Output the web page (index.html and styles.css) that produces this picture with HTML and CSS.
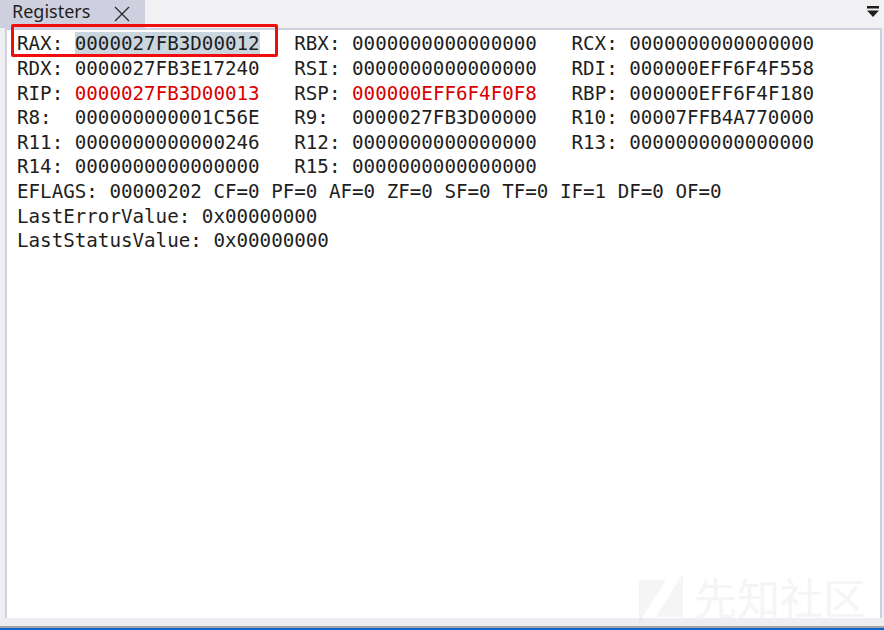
FILE: index.html
```html
<!DOCTYPE html>
<html lang="en">
<head>
<meta charset="utf-8">
<title>Registers</title>
<link rel="stylesheet" href="styles.css">
</head>
<body>
<div class="window">
  <header class="tabbar">
    <div class="tab">
      <span class="tab-title">Registers</span>
      <svg class="tab-close" width="16" height="16" viewBox="0 0 16 16"><path d="M1 1 L15 15 M15 1 L1 15" stroke="#2a2a2a" stroke-width="1.3" fill="none"/></svg>
    </div>
    <svg class="tab-menu" width="12" height="12" viewBox="0 0 12 12"><path d="M0 0H12V2.5H0Z M0 4.5H12L6 11Z" fill="#1e1e1e"/></svg>
  </header>
  <main class="pane">
    <div class="registers">
      <div class="line">RAX: <span class="sel">0000027FB3D00012</span>   RBX: 0000000000000000   RCX: 0000000000000000</div>
      <div class="line">RDX: 0000027FB3E17240   RSI: 0000000000000000   RDI: 000000EFF6F4F558</div>
      <div class="line">RIP: <span class="red">0000027FB3D00013</span>   RSP: <span class="red">000000EFF6F4F0F8</span>   RBP: 000000EFF6F4F180</div>
      <div class="line">R8:  000000000001C56E   R9:  0000027FB3D00000   R10: 00007FFB4A770000</div>
      <div class="line">R11: 0000000000000246   R12: 0000000000000000   R13: 0000000000000000</div>
      <div class="line">R14: 0000000000000000   R15: 0000000000000000</div>
      <div class="line">EFLAGS: 00000202 CF=0 PF=0 AF=0 ZF=0 SF=0 TF=0 IF=1 DF=0 OF=0</div>
      <div class="line">LastErrorValue: 0x00000000</div>
      <div class="line">LastStatusValue: 0x00000000</div>
    </div>
    <div class="watermark">
      <svg width="44" height="50" viewBox="0 0 44 50"><path d="M0 7H27L0 50Z M44 0V44H17Z" fill="#000" fill-opacity="0.04"/></svg>
      <span class="watermark-text">先知社区</span>
    </div>
  </main>
  <div class="callout"></div>
  <footer class="statusbar"></footer>
</div>
</body>
</html>
```
FILE: styles.css
```css
html, body {
  margin: 0;
  padding: 0;
  background: #eeeef2;
}
.window {
  position: relative;
  width: 884px;
  height: 630px;
  display: flex;
  flex-direction: column;
  overflow: hidden;
}
.tabbar {
  height: 28px;
  flex: none;
  display: flex;
  align-items: flex-start;
  justify-content: space-between;
  background: #f1f1f4;
}
.tab {
  width: 145px;
  height: 28px;
  background: #cfd0df;
  display: flex;
  align-items: center;
  box-sizing: border-box;
  padding-left: 12px;
  font-family: "Noto Sans", "Open Sans", sans-serif;
  font-size: 18px;
  color: #1e1e1e;
}
.tab-title {
  position: relative;
  top: -3px;
}
.tab-close {
  margin-left: 24px;
}
.tab-menu {
  margin: 6px 5px 0 0;
}
.pane {
  position: relative;
  flex: none;
  height: 590px;
  margin: 0 2px 0 5px;
  box-sizing: border-box;
  background: #fff;
  border: 2px solid #cfd0df;
  border-bottom: 0;
}
.registers {
  padding: 2.4px 0 0 10px;
  font-family: "DejaVu Sans Mono", monospace;
  font-size: 19.2px;
  line-height: 24.6px;
  color: #1e1e1e;
}
.line {
  white-space: pre;
}
.sel {
  background: #c9d6de;
}
.red {
  color: #d80000;
}
.watermark {
  position: absolute;
  right: 14px;
  bottom: -5px;
  display: flex;
  align-items: flex-end;
  gap: 11px;
}
.watermark-text {
  margin-bottom: 3px;
  font-family: "Noto Sans CJK SC", sans-serif;
  font-size: 43px;
  line-height: 48px;
  color: #f5f5f6;
}
.callout {
  position: absolute;
  left: 11px;
  top: 24px;
  width: 267px;
  height: 33px;
  box-sizing: border-box;
  border: 3px solid #f10d0d;
  border-radius: 2px;
}
.statusbar {
  flex: none;
  margin-top: 8px;
  height: 4px;
  box-sizing: border-box;
  border-top: 2px solid #a5a5a5;
  background: #0a66c8;
}
```
